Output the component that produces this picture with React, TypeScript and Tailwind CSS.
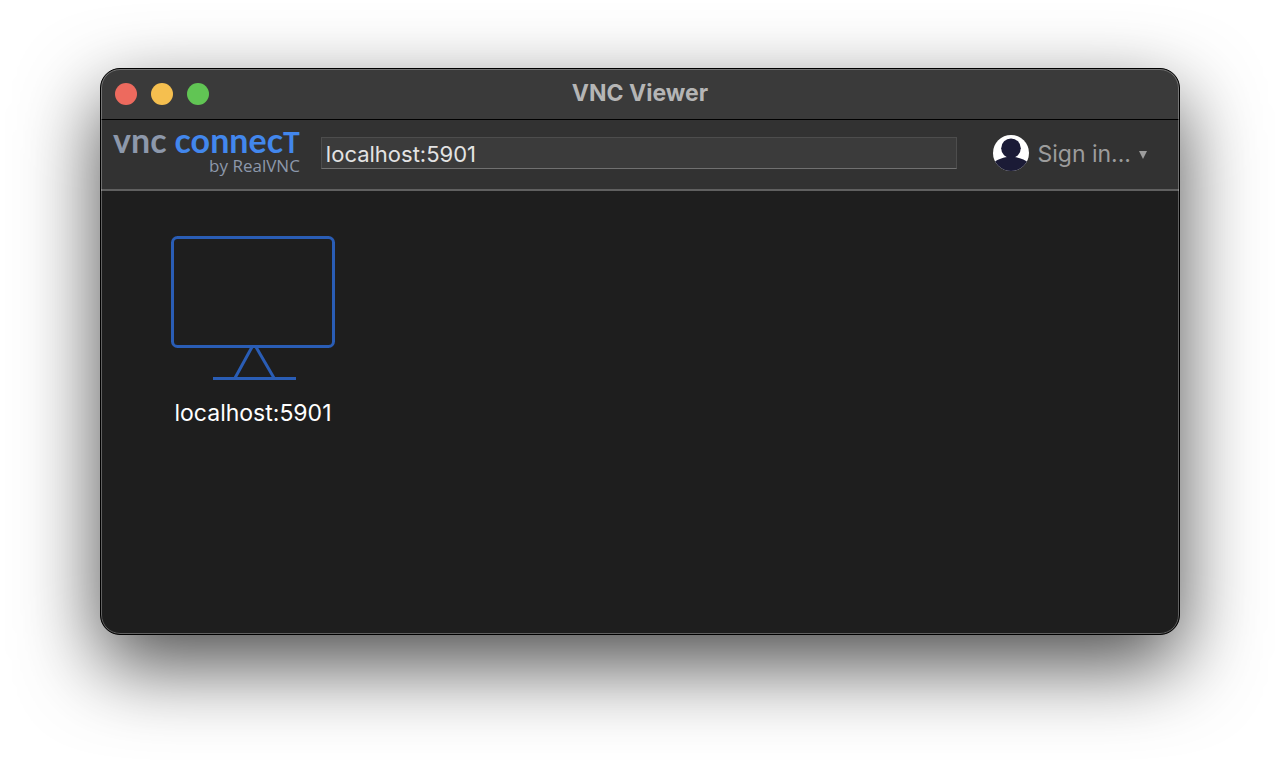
import React, { useState } from "react";

type Connection = {
  id: number;
  name: string;
};

const connections: Connection[] = [{ id: 1, name: "localhost:5901" }];

function TitleBar() {
  return (
    <header className="grid h-[51px] grid-cols-[1fr_auto_1fr] items-center border-b border-black bg-[#3a3a3a] px-3.5">
      <div className="flex gap-3.5">
        <button aria-label="Close" className="h-[22px] w-[22px] rounded-full bg-[#ed6a5e]" />
        <button aria-label="Minimize" className="h-[22px] w-[22px] rounded-full bg-[#f5bf4f]" />
        <button aria-label="Zoom" className="h-[22px] w-[22px] rounded-full bg-[#61c554]" />
      </div>
      <h1 className="pb-0.5 text-[23px] leading-7 font-bold text-[#b5b5b5]">VNC Viewer</h1>
    </header>
  );
}

function Logo() {
  return (
    <div className="flex shrink-0 flex-col items-end">
      <div className="flex items-baseline gap-2 font-['Lato',sans-serif] text-[34px] leading-6 font-bold">
        <span className="text-[#8d98ab]">vnc</span>
        <span className="text-[#4287ed]">
          connec<span className="text-[28px]">T</span>
        </span>
      </div>
      <span className="font-['Open_Sans',sans-serif] text-[17px] leading-6 text-[#8d98ab]">
        by RealVNC
      </span>
    </div>
  );
}

function Avatar() {
  return (
    <svg viewBox="0 0 36 36" className="h-9 w-9" aria-hidden="true">
      <clipPath id="avatar">
        <circle cx="18" cy="18" r="18" />
      </clipPath>
      <g clipPath="url(#avatar)">
        <rect width="36" height="36" fill="#fff" />
        <circle cx="18" cy="13.3" r="9.8" fill="#1b1b36" />
        <path d="M0 28.500C3 25 9 22.800 14.500 22V20H21.500V22C27 22.800 33 25 36 28.500V36H0Z" fill="#1b1b36" />
      </g>
    </svg>
  );
}

function Toolbar() {
  const [address, setAddress] = useState("localhost:5901");

  return (
    <div className="flex h-[71px] items-center border-b-2 border-[#606060] bg-[#323232] pr-8 pb-1 pl-3">
      <Logo />
      <input
        type="text"
        aria-label="Address"
        value={address}
        onChange={(e) => setAddress(e.target.value)}
        className="ml-[21px] h-8 min-w-0 flex-1 border border-[#4d4d4d] border-b-[#707070] bg-[#3b3b3b] px-1 pt-0.5 text-[22px] leading-7 text-[#e3e3e3] outline-none"
      />
      <button className="ml-9 flex shrink-0 items-center gap-2 text-[23px] leading-7 text-[#9c9c9c]">
        <Avatar />
        <span className="pt-0.5">Sign in...</span>
        <svg viewBox="0 0 8 8" className="mt-1 h-2 w-2" fill="currentColor" aria-hidden="true">
          <path d="M0 0H8L4 8Z" />
        </svg>
      </button>
    </div>
  );
}

function ConnectionTile({ connection }: { connection: Connection }) {
  return (
    <button className="flex flex-col items-center gap-4 text-white">
      <svg
        viewBox="0 0 166 146"
        className="h-[146px] w-[166px]"
        fill="none"
        stroke="#2a5db5"
        strokeWidth="3"
        aria-hidden="true"
      >
        <rect x="2.5" y="2.5" width="161" height="109" rx="5" />
        <path d="M82 112L65 143M86 112L104 143M43 143.500H126" />
      </svg>
      <span className="text-[23px] leading-8">{connection.name}</span>
    </button>
  );
}

export default function App() {
  return (
    <div className="flex h-screen flex-col overflow-hidden bg-white px-[100px] pt-[68px] pb-[133px] font-['Inter',sans-serif]">
      <div className="relative flex flex-1 flex-col overflow-hidden rounded-[20px] border border-black bg-[#1e1e1e] shadow-[0_30px_80px_rgba(0,0,0,0.7)]">
        <TitleBar />
        <Toolbar />
        <main className="flex flex-1 flex-wrap content-start gap-8 px-[69px] py-11">
          {connections.map((connection) => (
            <ConnectionTile key={connection.id} connection={connection} />
          ))}
        </main>

        {/* Inner edge highlight */}
        <div className="pointer-events-none absolute inset-0 rounded-[19px] border border-white/30" />
      </div>
    </div>
  );
}
